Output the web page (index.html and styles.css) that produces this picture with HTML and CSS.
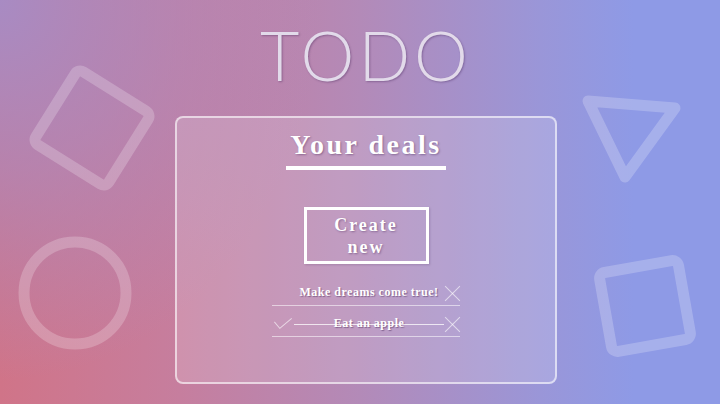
FILE: index.html
```html
<!DOCTYPE html>
<html lang="en">
<head>
    <meta charset="UTF-8">
    <meta name="viewport" content="width=device-width, initial-scale=1.0">
    <title>TODO</title>
    <link rel="stylesheet" href="styles.css">
</head>
<body>
    <svg class="shapes" width="720" height="404" viewBox="0 0 720 404">
        <rect x="49" y="85" width="86" height="86" rx="6" transform="rotate(32 92 128)"/>
        <circle cx="75" cy="293" r="51"/>
        <polygon points="588,101 675,108 625,177"/>
        <rect x="605" y="266" width="80" height="80" rx="6" transform="rotate(-10 645 306)"/>
    </svg>

    <div class="page">
        <h1 class="logo">TODO</h1>

        <div class="card">
            <h2 class="card-title">Your deals</h2>

            <button type="button" class="create-btn">Create<br>new</button>

            <ul class="todo-list">
                <li class="todo-item">
                    <span class="check"></span>
                    <span class="todo-text">Make dreams come true!</span>
                    <span class="remove"></span>
                </li>
                <li class="todo-item done">
                    <span class="check"></span>
                    <span class="todo-text">Eat an apple</span>
                    <span class="remove"></span>
                </li>
            </ul>
        </div>
    </div>
</body>
</html>
```

FILE: styles.css
```css
html, body {
    margin: 0;
    height: 100%;
}
body {
    position: relative;
    overflow: hidden;
    font-family: "Liberation Serif", "Times New Roman", serif;
    color: #fff;
    background:
        radial-gradient(ellipse 320px 380px at 0 0, #a88bc3 0%, rgba(168, 139, 195, 0.6) 45%, rgba(168, 139, 195, 0) 100%),
        linear-gradient(90deg, #d07488 0%, #c67e9e 25%, #b38ab8 50%, #9a96d8 75%, #8e9ae6 88%, #8e9ae6 100%);
}
.shapes {
    position: absolute;
    top: 0;
    left: 0;
}
.shapes rect,
.shapes circle,
.shapes polygon {
    fill: none;
    stroke: rgba(255, 255, 255, 0.22);
    stroke-width: 11;
    stroke-linejoin: round;
}
.page {
    position: relative;
    display: flex;
    flex-direction: column;
    align-items: center;
    padding-left: 12px;
}
.logo {
    margin: 18px 0 0;
    font-family: Lato, "Open Sans", sans-serif;
    font-weight: 300;
    font-size: 68px;
    line-height: 74px;
    letter-spacing: 4px;
    color: #e2daea;
    text-shadow: 1px 1px 2px rgba(60, 30, 80, 0.35);
}
.card {
    box-sizing: border-box;
    width: 382px;
    height: 268px;
    margin-top: 24px;
    border: 2px solid rgba(255, 255, 255, 0.6);
    border-radius: 8px;
    background: rgba(255, 255, 255, 0.16);
    display: flex;
    flex-direction: column;
    align-items: center;
}
.card-title {
    margin: 10px 0 0;
    padding: 0 4px 4px;
    font-size: 28px;
    line-height: 34px;
    letter-spacing: 2.5px;
    border-bottom: 4px solid #fff;
    text-shadow: 1px 1px 2px rgba(60, 30, 80, 0.4);
}
.create-btn {
    margin-top: 37px;
    width: 125px;
    height: 57px;
    border: 3px solid #fff;
    background: transparent;
    color: #fff;
    font-family: inherit;
    font-weight: bold;
    font-size: 18px;
    line-height: 22px;
    letter-spacing: 2px;
    text-shadow: 1px 1px 2px rgba(60, 30, 80, 0.4);
    cursor: pointer;
    box-shadow: 1px 1px 2px rgba(60, 30, 80, 0.2);
}
.todo-list {
    list-style: none;
    margin: 11px 0 0;
    padding: 0;
    width: 188px;
}
.todo-item {
    box-sizing: border-box;
    display: flex;
    align-items: center;
    height: 31px;
    padding-top: 5px;
    border-bottom: 1px solid rgba(255, 255, 255, 0.55);
}
.todo-text {
    position: relative;
    flex: 1;
    text-align: center;
    font-weight: bold;
    font-size: 12px;
    letter-spacing: 0.5px;
    text-shadow: 1px 1px 1px rgba(60, 30, 80, 0.45);
    white-space: nowrap;
}
.done .todo-text::after {
    content: "";
    position: absolute;
    left: 0;
    right: 0;
    top: 50%;
    border-top: 1px solid rgba(255, 255, 255, 0.75);
}
.check {
    width: 22px;
    height: 16px;
    position: relative;
}
.done .check::before {
    content: "";
    position: absolute;
    left: 3px;
    top: 0;
    width: 15px;
    height: 8px;
    border-left: 1px solid rgba(255, 255, 255, 0.6);
    border-bottom: 1px solid rgba(255, 255, 255, 0.6);
    transform: rotate(-40deg);
}
.remove {
    position: relative;
    width: 16px;
    height: 16px;
}
.remove::before,
.remove::after {
    content: "";
    position: absolute;
    left: -2px;
    top: 8px;
    width: 21px;
    border-top: 1px solid rgba(255, 255, 255, 0.6);
    transform: rotate(45deg);
}
.remove::after {
    transform: rotate(-45deg);
}
```
